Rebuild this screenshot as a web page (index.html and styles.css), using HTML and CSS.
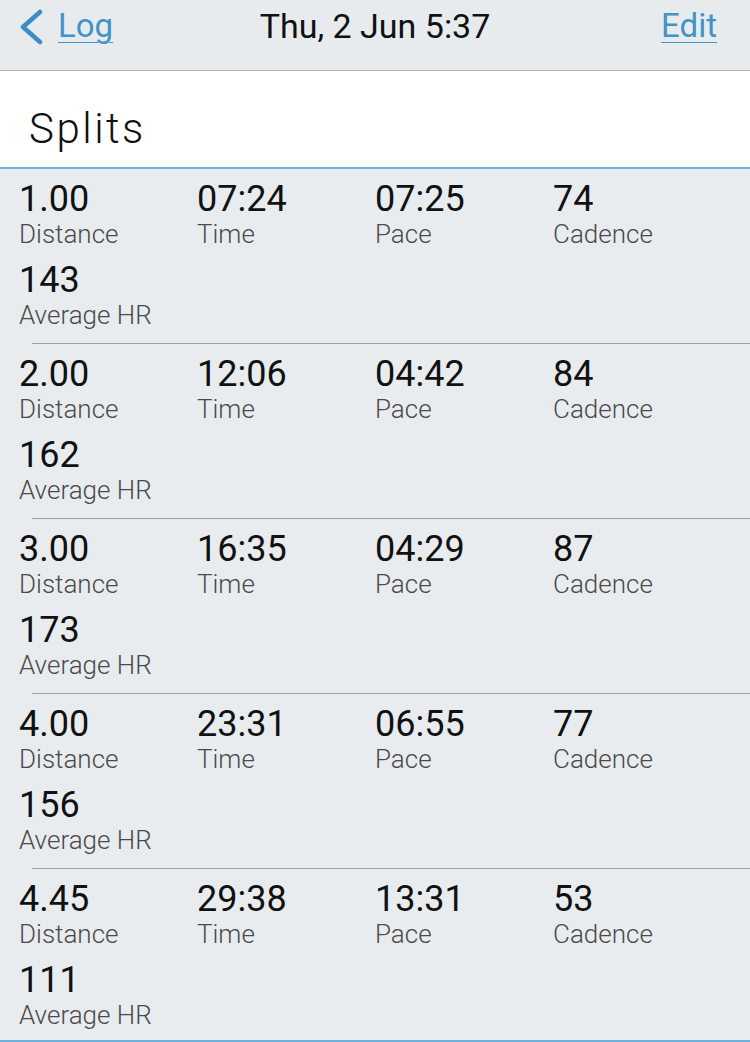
FILE: index.html
```html
<!DOCTYPE html>
<html lang="en">

<head>
    <meta charset="UTF-8">
    <meta name="viewport" content="width=device-width, initial-scale=1.0">
    <title>Splits</title>
    <link rel="stylesheet" href="styles.css">
</head>

<body>
    <header class="topbar">
        <a class="nav-link back" href="#">
            <svg class="chevron" width="26" height="36" viewBox="0 0 26 36">
                <polyline points="22,3 5,18 22,33" fill="none" stroke="#3f8cbf" stroke-width="4.5" stroke-linecap="round" stroke-linejoin="round" />
            </svg>
            <span class="link-text">Log</span>
        </a>
        <div class="date">Thu, 2 Jun 5:37</div>
        <a class="nav-link edit" href="#"><span class="link-text">Edit</span></a>
    </header>

    <section class="title-block">
        <h1>Splits</h1>
    </section>

    <div class="splits">
        <div class="split">
            <div class="stat"><div class="value">1.00</div><div class="label">Distance</div></div>
            <div class="stat"><div class="value">07:24</div><div class="label">Time</div></div>
            <div class="stat"><div class="value">07:25</div><div class="label">Pace</div></div>
            <div class="stat"><div class="value">74</div><div class="label">Cadence</div></div>
            <div class="stat"><div class="value">143</div><div class="label">Average HR</div></div>
        </div>
        <div class="split">
            <div class="stat"><div class="value">2.00</div><div class="label">Distance</div></div>
            <div class="stat"><div class="value">12:06</div><div class="label">Time</div></div>
            <div class="stat"><div class="value">04:42</div><div class="label">Pace</div></div>
            <div class="stat"><div class="value">84</div><div class="label">Cadence</div></div>
            <div class="stat"><div class="value">162</div><div class="label">Average HR</div></div>
        </div>
        <div class="split">
            <div class="stat"><div class="value">3.00</div><div class="label">Distance</div></div>
            <div class="stat"><div class="value">16:35</div><div class="label">Time</div></div>
            <div class="stat"><div class="value">04:29</div><div class="label">Pace</div></div>
            <div class="stat"><div class="value">87</div><div class="label">Cadence</div></div>
            <div class="stat"><div class="value">173</div><div class="label">Average HR</div></div>
        </div>
        <div class="split">
            <div class="stat"><div class="value">4.00</div><div class="label">Distance</div></div>
            <div class="stat"><div class="value">23:31</div><div class="label">Time</div></div>
            <div class="stat"><div class="value">06:55</div><div class="label">Pace</div></div>
            <div class="stat"><div class="value">77</div><div class="label">Cadence</div></div>
            <div class="stat"><div class="value">156</div><div class="label">Average HR</div></div>
        </div>
        <div class="split last">
            <div class="stat"><div class="value">4.45</div><div class="label">Distance</div></div>
            <div class="stat"><div class="value">29:38</div><div class="label">Time</div></div>
            <div class="stat"><div class="value">13:31</div><div class="label">Pace</div></div>
            <div class="stat"><div class="value">53</div><div class="label">Cadence</div></div>
            <div class="stat"><div class="value">111</div><div class="label">Average HR</div></div>
        </div>
    </div>
</body>

</html>
```

FILE: styles.css
```css
body {
    background-color: #e9ecef;
    font-family: Roboto, "Noto Sans", sans-serif;
    margin: 0;
    padding: 0;
}

.topbar {
    height: 71px;
    box-sizing: border-box;
    padding: 6px 33px 0 18px;
    background-color: #e8ebee;
    border-bottom: 1px solid #b4b6b8;
    display: flex;
    justify-content: space-between;
    align-items: flex-start;
}

.nav-link {
    display: flex;
    align-items: center;
    color: #4393c6;
    text-decoration: none;
    font-size: 33px;
    line-height: 40px;
}

.link-text {
    text-decoration: underline;
    text-decoration-thickness: 1px;
    text-underline-offset: 5px;
}

.chevron {
    margin-right: 14px;
    margin-top: 2px;
}

.back {
    width: 155px;
}

.edit {
    width: 140px;
    justify-content: flex-end;
}

.date {
    font-size: 34px;
    line-height: 40px;
    color: #111;
}

.title-block {
    background-color: #fff;
    padding: 34px 29px 14px;
    border-bottom: 2px solid #6cb2dc;
}

h1 {
    font-size: 42px;
    font-weight: 300;
    letter-spacing: 2.5px;
    line-height: 48px;
    margin: 0;
    color: #111;
}

.split {
    position: relative;
    display: grid;
    grid-template-columns: repeat(4, 178px);
    row-gap: 14px;
    padding: 12px 19px 15px;
}

.split.last {
    padding-bottom: 13px;
}

.split::after {
    content: "";
    position: absolute;
    left: 32px;
    right: 0;
    bottom: 0;
    height: 1px;
    background-color: #9c9fa1;
}

.split.last::after {
    left: 0;
    height: 2px;
    background-color: #6cb2dc;
}

.value {
    font-size: 36px;
    line-height: 36px;
    color: #111;
}

.label {
    margin-top: 3px;
    font-size: 26px;
    font-weight: 300;
    line-height: 28px;
    color: #4a4a4a;
}
```
